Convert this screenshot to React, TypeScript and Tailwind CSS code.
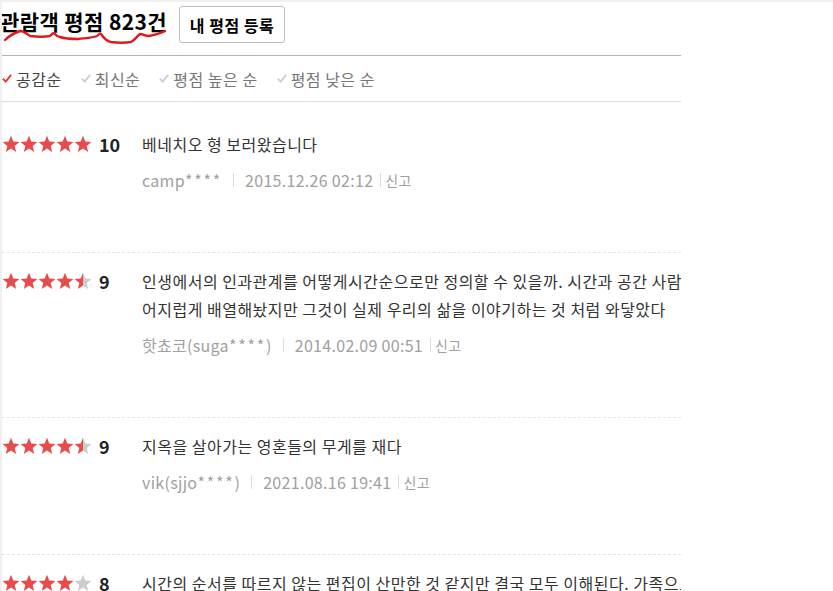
import React from "react";

const RED = "#e84b4b";
const GRAY = "#cccccc";

function Stars({ score, id }: { score: number; id: string }) {
  const pts = "9,0.8 11.3,6.5 17.4,6.9 12.7,10.9 14.2,16.9 9,13.6 3.8,16.9 5.3,10.9 0.6,6.9 6.7,6.5";
  const stars = [];
  for (let i = 0; i < 5; i++) {
    const v = Math.max(0, Math.min(2, score - i * 2));
    let fill = GRAY;
    if (v >= 2) fill = RED;
    else if (v === 1) fill = `url(#half-${id})`;
    stars.push(
      <polygon key={i} points={pts} transform={`translate(${i * 18},0)`} fill={fill} />
    );
  }
  return (
    <svg width="90" height="18" viewBox="0 0 90 18">
      <defs>
        <linearGradient id={`half-${id}`} x1="0" x2="1" y1="0" y2="0">
          <stop offset="50%" stopColor={RED} />
          <stop offset="50%" stopColor={GRAY} />
        </linearGradient>
      </defs>
      {stars}
    </svg>
  );
}

type Review = {
  score: number;
  lines: string[];
  name: string;
  masked: string;
  tail: string;
  date: string;
};

const reviews: Review[] = [
  {
    score: 10,
    lines: ["베네치오 형 보러왔습니다"],
    name: "camp",
    masked: "****",
    tail: "",
    date: "2015.12.26 02:12",
  },
  {
    score: 9,
    lines: [
      "인생에서의 인과관계를 어떻게시간순으로만 정의할 수 있을까. 시간과 공간 사람을",
      "어지럽게 배열해놨지만 그것이 실제 우리의 삶을 이야기하는 것 처럼 와닿았다",
    ],
    name: "핫쵸코(suga",
    masked: "****",
    tail: ")",
    date: "2014.02.09 00:51",
  },
  {
    score: 9,
    lines: ["지옥을 살아가는 영혼들의 무게를 재다"],
    name: "vik(sjjo",
    masked: "****",
    tail: ")",
    date: "2021.08.16 19:41",
  },
  {
    score: 8,
    lines: ["시간의 순서를 따르지 않는 편집이 산만한 것 같지만 결국 모두 이해된다. 가족으로"],
    name: "mov",
    masked: "****",
    tail: "",
    date: "2019.05.01 12:00",
  },
];

function Check({ active }: { active: boolean }) {
  return (
    <svg width="10" height="9" viewBox="0 0 10 9" className="mr-[4px]">
      <path
        d="M0.9 4.6 L3.7 7.6 L9.1 0.9"
        fill="none"
        stroke={active ? "#e53b3b" : "#cfcfcf"}
        strokeWidth="2"
      />
    </svg>
  );
}

export default function App() {
  const sorts = ["공감순", "최신순", "평점 높은 순", "평점 낮은 순"];
  return (
    <div className="relative w-[833px] h-[591px] overflow-hidden bg-white font-['Noto_Sans_CJK_KR','Noto_Sans',sans-serif]">
      <div className="border-t-2 border-l-2 border-[#f0f0f0] h-full">
        <div className="w-[679px] overflow-hidden">
          {/* header */}
          <div className="flex items-start h-[54px] border-b border-[#b4b4b4] pt-[4px]">
            <div className="h-[37px] flex items-center">
              <h2 className="-ml-[2px] text-[21px] font-bold text-black leading-none tracking-[0.4px] relative top-[-3px]">
                관람객 평점 823건
              </h2>
            </div>
            <button className="ml-[12px] h-[37px] w-[106px] border border-[#bdbdbd] rounded-[3px] text-[16px] font-bold text-black bg-white leading-none tracking-[0.5px]">
              내 평점 등록
            </button>
          </div>
          {/* sort tabs */}
          <div className="flex items-center h-[46px] border-b border-[#dddddd] text-[16px] tracking-[0.5px]">
            {sorts.map((s, i) => (
              <div key={s} className={`flex items-center ${i === 0 ? "ml-0" : "ml-[19px]"}`}>
                <Check active={i === 0} />
                <span className={i === 0 ? "text-[#444]" : "text-[#777]"}>{s}</span>
              </div>
            ))}
          </div>
          {/* reviews */}
          <div className="pt-[14px]">
            {reviews.map((r, idx) => (
              <div
                key={idx}
                className="flex pt-[14px] pb-[62px] border-b border-dashed border-[#e4e4e4]"
              >
                <div className="w-[140px] shrink-0 flex items-center h-[28px]">
                  <Stars score={r.score} id={`s${idx}`} />
                  <span className="ml-[7px] text-[18px] font-bold text-[#222] leading-none">
                    {r.score}
                  </span>
                </div>
                <div className="flex-1 min-w-0">
                  {r.lines.map((l, j) => (
                    <p
                      key={j}
                      className="text-[16px] leading-[28px] tracking-[0.5px] text-[#333] whitespace-nowrap"
                    >
                      {l}
                    </p>
                  ))}
                  <div className="flex items-center mt-[12px] h-[20px] text-[16px] tracking-[0.3px] text-[#a0a0a0]">
                    <span>
                      {r.name}
                      <span className="tracking-[1.8px]">{r.masked}</span>
                      {r.tail}
                    </span>
                    <span className="w-px h-[14px] bg-[#dcdcdc] mx-[11px]" />
                    <span>{r.date}</span>
                    <span className="w-px h-[14px] bg-[#dcdcdc] ml-[7px] mr-[4px]" />
                    <span className="text-[14px]">신고</span>
                  </div>
                </div>
              </div>
            ))}
          </div>
        </div>
      </div>
      {/* hand-drawn red annotation under the title */}
      <svg
        className="absolute left-0 top-0 pointer-events-none"
        width="180"
        height="50"
        viewBox="0 0 180 50"
      >
        <path
          d="M5 40 C9 36 14 33 20 31 C24 31 27 34 30 36 C38 37 45 37 50 36 C52 35 52 33 54 33 C56 35 57 37 60 37 C66 39 72 39 78 39 C86 38 92 38 97 36 C99 34 100 33 101 34 C103 37 106 41 111 42 C118 43 125 43 131 42 C135 40 137 36 140 34 C143 34 145 36 149 36 C154 35 158 34 160 33 C162 32 163 32 165 31"
          fill="none"
          stroke="#e0191b"
          strokeWidth="2.4"
          strokeLinecap="round"
          strokeLinejoin="round"
        />
      </svg>
    </div>
  );
}
